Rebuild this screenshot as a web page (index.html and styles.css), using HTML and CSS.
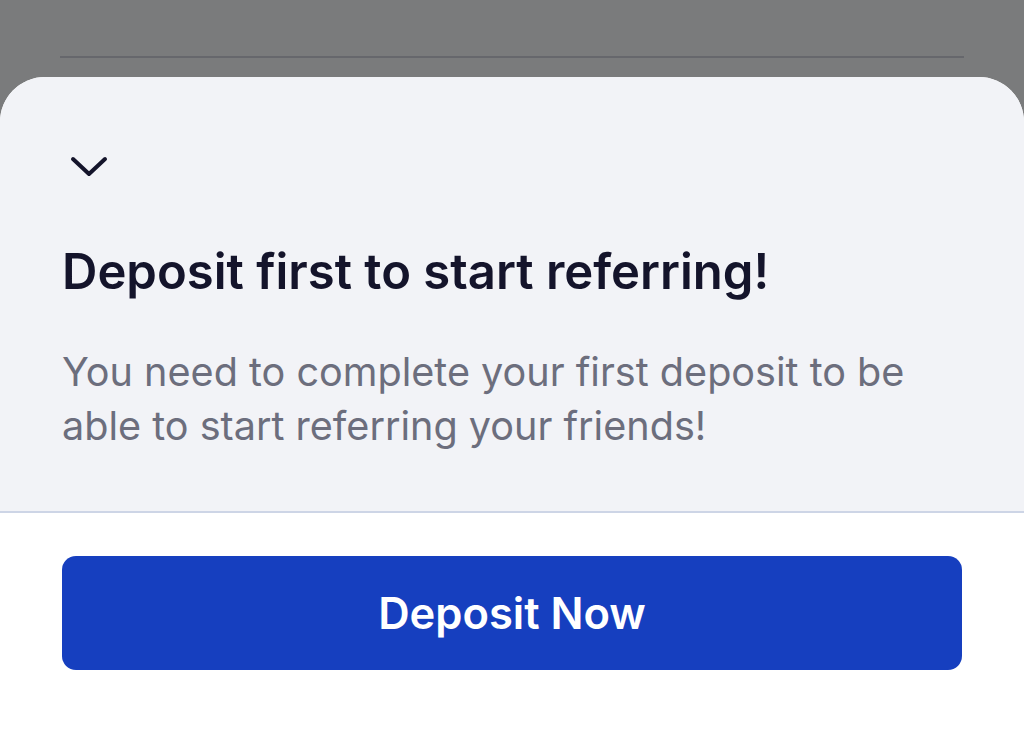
FILE: index.html
```html
<html>
<head>
    <title>Deposit first</title>
    <link rel="stylesheet" href="styles.css">
</head>
<body>
<div class="backdrop">
    <div class="backdrop-rule"></div>
</div>
<div class="sheet">
    <div class="sheet-body">
        <button class="collapse" aria-label="Close">
            <svg width="38" height="24" viewBox="0 0 38 24">
                <path d="M3 4 L19 19 L35 4" fill="none" stroke="#14142b" stroke-width="4" stroke-linecap="round" stroke-linejoin="round"/>
            </svg>
        </button>
        <h1>Deposit first to start referring!</h1>
        <p>You need to complete your first deposit to be able to start referring your friends!</p>
    </div>
    <div class="sheet-footer">
        <button class="primary">Deposit Now</button>
    </div>
</div>
</body>
</html>
```

FILE: styles.css
```css
body {
    margin: 0;
    background-color: #7a7b7c;
    font-family: Inter, "Noto Sans", sans-serif;
    height: 732px;
    overflow: hidden;
}

.backdrop {
    height: 77px;
    padding: 0 60px;
    box-sizing: border-box;
    display: flex;
    flex-direction: column;
}

.backdrop-rule {
    margin-top: 56px;
    height: 2px;
    background-color: #66676c;
}

.sheet {
    background-color: #ffffff;
    border-radius: 45px 45px 0 0;
    overflow: hidden;
    height: 655px;
}

.sheet-body {
    background-color: #f2f3f7;
    padding: 78px 62px 0 62px;
    height: 436px;
    box-sizing: border-box;
    border-bottom: 2px solid #cdd5e6;
}

.collapse {
    display: block;
    border: none;
    background: none;
    padding: 0;
    margin-left: 8px;
    height: 24px;
}

h1 {
    margin: 63px 0 0 0;
    font-size: 49px;
    line-height: 60px;
    font-weight: 600;
    color: #14142b;
    letter-spacing: 0;
}

p {
    margin: 43px 0 0 0;
    font-size: 39.6px;
    line-height: 54px;
    color: #6c6e7d;
    max-width: 860px;
}

.sheet-footer {
    padding: 43px 62px 0 62px;
}

.primary {
    width: 100%;
    height: 114px;
    border: none;
    border-radius: 14px;
    background-color: #163fbf;
    color: #ffffff;
    font-family: Inter, "Noto Sans", sans-serif;
    font-size: 43.5px;
    font-weight: 600;
}
```
